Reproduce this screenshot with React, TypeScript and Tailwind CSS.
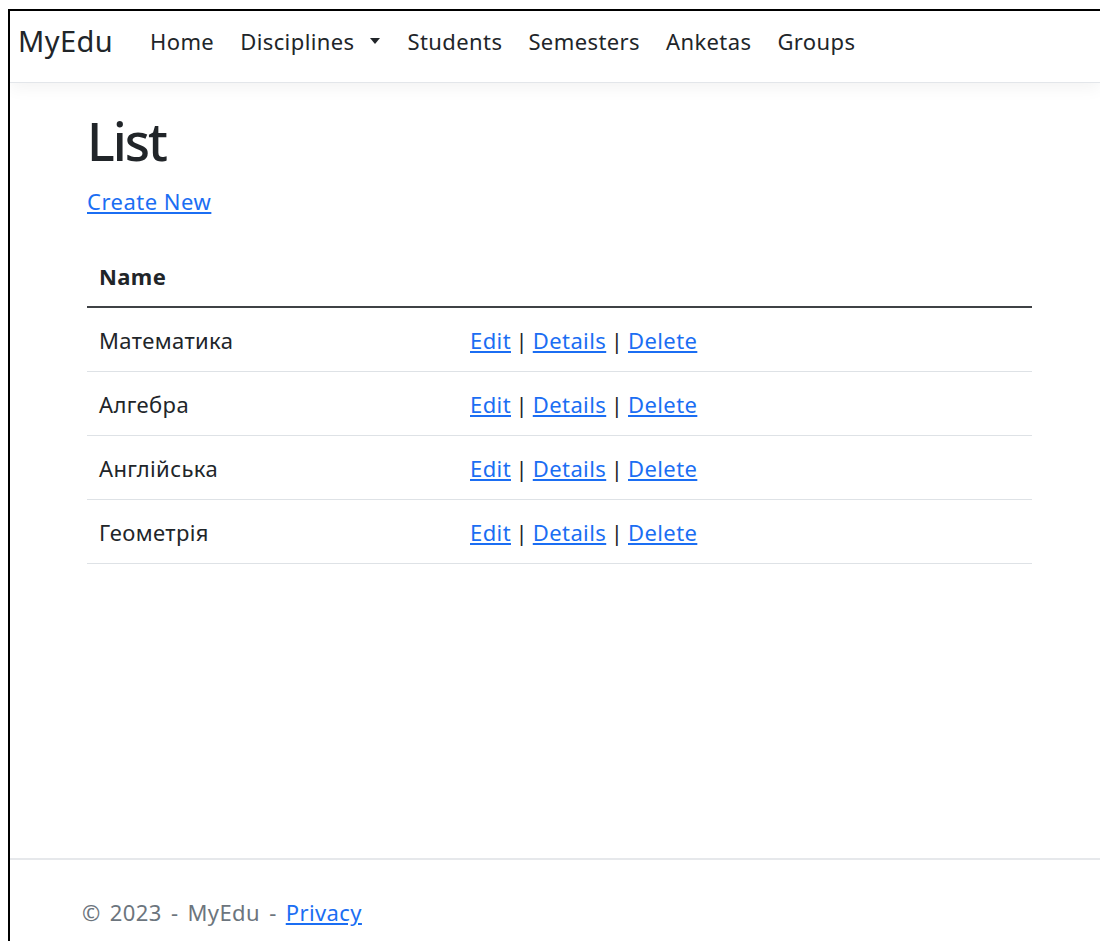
import React from "react";

const disciplines = ["Математика", "Алгебра", "Англійська", "Геометрія"];

const navLinks = ["Home", "Disciplines", "Students", "Semesters", "Anketas", "Groups"];

function NavBar() {
  return (
    <header className="h-[72px] shrink-0 border-b border-[#e3e6ea] bg-white shadow-[0_5px_16px_rgba(0,0,0,0.05)] relative z-10">
      <nav className="flex items-center h-[60px] pl-[8px]">
        <a className="text-[29px] leading-[40px] tracking-[0.4px] text-[#212529] mr-[24px]">MyEdu</a>
        {navLinks.map((l) => (
          <a key={l} className="flex items-center px-[13px] text-[22px] leading-[32px] tracking-[0.4px] text-[#212529]">
            {l}
            {l === "Disciplines" && (
              <span className="ml-[15px] mr-[2px] inline-block w-0 h-0 border-l-[5px] border-r-[5px] border-t-[6px] border-l-transparent border-r-transparent border-t-[#212529]" />
            )}
          </a>
        ))}
      </nav>
    </header>
  );
}

function ActionLinks() {
  return (
    <span className="[word-spacing:-1.5px]">
      <a className="text-[#1b6ef3] underline">Edit</a> |{" "}
      <a className="text-[#1b6ef3] underline">Details</a> |{" "}
      <a className="text-[#1b6ef3] underline">Delete</a>
    </span>
  );
}

export default function App() {
  return (
    <div className="min-h-[941px] bg-white pt-[9px] pl-[8px] font-['Noto_Sans','Open_Sans',sans-serif] text-[#212529]">
      <div className="h-[932px] border-l-2 border-t-2 border-black flex flex-col overflow-hidden">
        <NavBar />
        <main className="flex-1 pl-[77px]">
          <h1 className="mt-[26px] text-[52px] leading-[64px] tracking-[-2px] font-medium">List</h1>
          <p className="mt-[12px] text-[22px] leading-[32px] tracking-[0.5px]">
            <a className="text-[#1b6ef3] underline">Create New</a>
          </p>
          <table className="mt-[27px] w-[945px] text-[22px] leading-[32px] tracking-[0.4px] border-collapse">
            <thead>
              <tr className="border-b-2 border-[#3f4245]">
                <th className="text-left font-bold px-[12px] pt-[16px] pb-[14px]">Name</th>
                <th className="px-[12px]"></th>
              </tr>
            </thead>
            <tbody>
              {disciplines.map((d) => (
                <tr key={d} className="border-b border-[#dee2e6]">
                  <td className="w-[371px] px-[12px] pt-[16px] pb-[15px]">{d}</td>
                  <td className="px-[12px] pt-[16px] pb-[15px]">
                    <ActionLinks />
                  </td>
                </tr>
              ))}
            </tbody>
          </table>
        </main>
        <footer className="h-[83px] shrink-0 border-t-2 border-[#e6e8eb] pl-[72px] pt-[36px] text-[22px] leading-[32px] tracking-[0.4px] [word-spacing:3px] text-[#6c757d]">
          © 2023 - MyEdu - <a className="text-[#1b6ef3] underline">Privacy</a>
        </footer>
      </div>
    </div>
  );
}
